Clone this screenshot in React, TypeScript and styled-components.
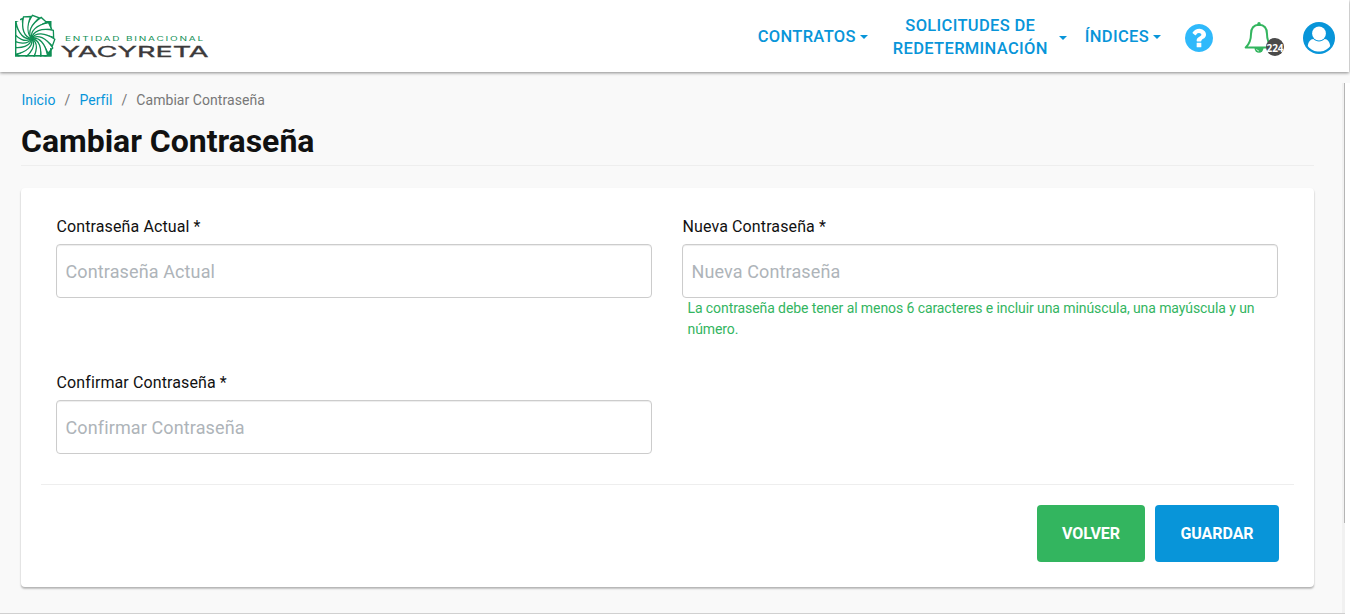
import React from "react";
import styled, { createGlobalStyle } from "styled-components";

const GlobalStyle = createGlobalStyle`
  *, *::before, *::after { box-sizing: border-box; }
  html, body, #root { height: 100%; }
  body {
    margin: 0;
    overflow: hidden;
    background: #f9f9f9;
    color: #111;
    font-family: Roboto, "Liberation Sans", sans-serif;
    font-size: 16px;
    line-height: 1.42857;
  }
`;

const Page = styled.div`
  display: flex;
  flex-direction: column;
  height: 614px;
`;

const Header = styled.header`
  display: flex;
  flex: none;
  align-items: center;
  justify-content: space-between;
  width: 1349px;
  height: 72px;
  padding: 0 14px 0 14px;
  background: #fff;
  box-shadow: 0 1px 3px rgba(0, 0, 0, 0.45);
  z-index: 1;
`;

const Logo = styled.svg`
  display: block;
  width: 200px;
  height: 48px;
`;

const Nav = styled.nav`
  display: flex;
  align-items: center;
`;

const NavItem = styled.a<{ $gap: number; $after: number; $drop?: number }>`
  display: flex;
  align-items: center;
  gap: ${(p) => p.$gap}px;
  margin-top: ${(p) => p.$drop ?? 0}px;
  margin-right: ${(p) => p.$after}px;
  color: #0895d9;
  font-size: 16.5px;
  font-weight: 500;
  line-height: 23px;
  letter-spacing: 0.33px;
  text-align: center;
  white-space: pre-line;
`;

const Caret = styled.span`
  border: 4px solid transparent;
  border-top-color: currentColor;
  border-bottom: 0;
  margin-top: 2px;
`;

const Icon = styled.svg<{ $w: number; $h: number }>`
  display: block;
  flex: none;
  width: ${(p) => p.$w}px;
  height: ${(p) => p.$h}px;
  overflow: visible;
`;

const IconLink = styled.a`
  margin-top: 3px;
`;

const BellBox = styled.div`
  position: relative;
  margin: 3px 19px 0 31px;
  width: 40px;
  height: 34px;
`;

const Badge = styled.span`
  position: absolute;
  left: 22px;
  top: 17px;
  width: 18px;
  height: 18px;
  border-radius: 50%;
  background: #4a4a4a;
  color: #fff;
  font: 700 10px/20px "Open Sans", sans-serif;
  display: flex;
  justify-content: center;
`;

const Body = styled.div`
  display: flex;
  flex: 1;
  min-height: 0;
`;

const Content = styled.main`
  flex: none;
  width: 1342px;
  padding: 18px 28px 0 21px;
  border-bottom: 1px solid #d0d0d0;
`;

const ScrollRail = styled.div`
  width: 3px;
  margin-top: 11px;
  background: #f1f1f1;
  border-bottom: 1px solid #d0d0d0;
`;

const ScrollThumb = styled.div`
  width: 1px;
  height: 440px;
  margin-left: 2px;
  background: #b5b5b5;
`;

const Gutter = styled.div`
  flex: 1;
  margin-top: 11px;
  background: #fff;
`;

const Breadcrumb = styled.div`
  display: flex;
  gap: 9px;
  height: 20px;
  padding-left: 0.5px;
  font-size: 14px;
  line-height: 20px;
  letter-spacing: 0.06px;
  color: #777;
`;

const Crumb = styled.a`
  color: #0895d9;
`;

const Title = styled.h1`
  margin: 0 0 22px;
  height: 56px;
  padding: 9px 0 0;
  border-bottom: 1px solid #eee;
  font-size: 32px;
  font-weight: 700;
  line-height: 44px;
  letter-spacing: -0.03px;
`;

const Card = styled.section`
  height: 399px;
  padding: 27px 20px 0;
  border-radius: 4px;
  background: #fff;
  box-shadow: 0 2px 2px rgba(0, 0, 0, 0.2), 0 1px 2px rgba(0, 0, 0, 0.12);
`;

const Fields = styled.div`
  display: grid;
  grid-template-columns: 596px 596px;
  column-gap: 30px;
  grid-template-rows: 156px 113px;
  padding-left: 15px;
`;

const Label = styled.label`
  display: block;
  height: 29px;
  line-height: 23px;
  padding-left: 0.5px;
  letter-spacing: 0.11px;
`;

const Input = styled.input`
  display: block;
  width: 100%;
  height: 54px;
  padding: 0 8.5px;
  border: 1px solid #ccc;
  border-radius: 4px;
  background: #fff;
  box-shadow: inset 0 1px 1px rgba(0, 0, 0, 0.075);
  font: 18px Roboto, sans-serif;
  letter-spacing: 0.12px;
  &::placeholder { color: #aeb4b9; opacity: 1; }
`;

const Hint = styled.p`
  margin: 0 5px 0 5.5px;
  font-size: 14px;
  line-height: 21px;
  letter-spacing: -0.085px;
  color: #33b55f;
`;

const Actions = styled.div`
  display: flex;
  justify-content: flex-end;
  gap: 10px;
  padding: 20px 15px 0;
  border-top: 1px solid #eee;
`;

const Button = styled.button<{ $color: string; $w: number }>`
  width: ${(p) => p.$w}px;
  height: 57px;
  padding: 0;
  border: 0;
  border-radius: 4px;
  background: ${(p) => p.$color};
  color: #fff;
  font: 700 16px Roboto, sans-serif;
  letter-spacing: -0.05px;
`;

const blades = Array.from({ length: 16 }, (_, i) => i * 22.5 + 8);

const BrandLogo = () => (
  <Logo viewBox="14 12 200 48">
    <defs>
      <clipPath id="emblem">
        <path d="M15 21H20V14H46L56 30V56.500H15Z" />
      </clipPath>
    </defs>
    <path d="M15 21H51.500V56.500H15Z" fill="#0f8f55" />
    <g clipPath="url(#emblem)">
      {blades.map((a) => (
        <path
          key={a}
          transform={`translate(31.7 38.5) rotate(${a})`}
          d="M0 0C-7 -3 -8 -12 -2.500 -23L4.500 -21.500C-2 -13 -3 -5 0 0Z"
          fill="#fff"
          stroke="#0f8f55"
          strokeWidth="1.300"
        />
      ))}
    </g>
    <path d="M15.700 21V55.800H50.800V48" fill="none" stroke="#0f8f55" strokeWidth="1.400" />
    <text x="65" y="41" fill="#0f8f55" fontFamily="Inter" fontSize="5.600" letterSpacing="1" textLength="140" lengthAdjust="spacingAndGlyphs">
      ENTIDAD BINACIONAL
    </text>
    <text x="60.500" y="57" fill="#3c3a3b" stroke="#3c3a3b" strokeWidth=".3" fontFamily="Inter" fontSize="15" textLength="148" lengthAdjust="spacingAndGlyphs">
      YACYRETA
    </text>
  </Logo>
);

const HelpIcon = () => (
  <Icon $w={28} $h={28} viewBox="128 128 1536 1536">
    <path
      fill="#2fb9fb"
      d="M1024 1376v-192q0-14-9-23t-23-9h-192q-14 0-23 9t-9 23v192q0 14 9 23t23 9h192q14 0 23-9t9-23zm256-672q0-88-55.500-163t-138.500-116-170-41q-243 0-371 213-15 24 8 42l132 100q7 6 19 6 16 0 25-12 53-68 86-92 34-24 86-24 48 0 85.500 26t37.500 59q0 38-20 61t-68 45q-63 28-115.500 86.500t-52.500 125.500v36q0 14 9 23t23 9h192q14 0 23-9t9-23q0-19 21.500-49.500t54.500-49.500q32-18 49-28.500t46-35 44.500-48 28-60.500 12.500-81zm384 192q0 209-103 385.500t-279.500 279.500-385.500 103-385.500-103-279.500-279.500-103-385.500 103-385.500 279.500-279.500 385.500-103 385.500 103 279.500 279.500 103 385.500z"
    />
  </Icon>
);

const BellIcon = () => (
  <Icon $w={30} $h={34} viewBox="0 0 30 34">
    <path d="M15 3.800C9.500 4 7 8 7 13C7 19 5.500 23 1.700 26.500H28.300C24.500 23 23 19 23 13C23 8 20.500 4 15 3.800Z" fill="none" stroke="#33b55f" strokeWidth="2" strokeLinejoin="round" />
    <circle cx="15" cy="2.700" r="1.700" fill="#33b55f" />
    <path d="M10.500 27H19.500A4.500 4.800 0 0 1 10.500 27Z" fill="#33b55f" />
    <path d="M12.500 28A2.600 2.600 0 0 0 15 30" fill="none" stroke="#fff" strokeWidth=".7" />
  </Icon>
);

const UserIcon = () => (
  <Icon $w={32} $h={32} viewBox="0 0 32 32">
    <circle cx="16" cy="16" r="16" fill="#0895d9" />
    <path d="M4.800 24C5.300 19.500 7.500 17.300 10.300 17C13.300 20.200 18.700 20.200 21.700 17C24.500 17.300 26.700 19.500 27.200 24C24.200 28 20 29.600 16 29.600S7.800 28 4.800 24Z" fill="#fff" />
    <circle cx="16" cy="11.500" r="6.900" fill="#fff" />
  </Icon>
);

const App = () => (
  <>
    <GlobalStyle />
    <Page>
      <Header>
        <BrandLogo />
        <Nav>
          <NavItem $gap={4} $after={25}>CONTRATOS<Caret /></NavItem>
          <NavItem $gap={11} $after={18} $drop={1}>{"SOLICITUDES DE\nREDETERMINACIÓN"}<Caret /></NavItem>
          <NavItem $gap={4} $after={24}>ÍNDICES<Caret /></NavItem>
          <IconLink><HelpIcon /></IconLink>
          <BellBox>
            <BellIcon />
            <Badge>224</Badge>
          </BellBox>
          <IconLink><UserIcon /></IconLink>
        </Nav>
      </Header>
      <Body>
        <Content>
          <Breadcrumb>
            <Crumb>Inicio</Crumb>
            <span>/</span>
            <Crumb>Perfil</Crumb>
            <span>/</span>
            <span>Cambiar Contraseña</span>
          </Breadcrumb>
          <Title>Cambiar Contraseña</Title>
          <Card>
            <Fields>
              <div>
                <Label>Contraseña Actual *</Label>
                <Input placeholder="Contraseña Actual" />
              </div>
              <div>
                <Label>Nueva Contraseña *</Label>
                <Input placeholder="Nueva Contraseña" />
                <Hint>La contraseña debe tener al menos 6 caracteres e incluir una minúscula, una mayúscula y un número.</Hint>
              </div>
              <div>
                <Label>Confirmar Contraseña *</Label>
                <Input placeholder="Confirmar Contraseña" />
              </div>
            </Fields>
            <Actions>
              <Button $color="#33b55f" $w={108}>VOLVER</Button>
              <Button $color="#0895d9" $w={124}>GUARDAR</Button>
            </Actions>
          </Card>
        </Content>
        <ScrollRail>
          <ScrollThumb />
        </ScrollRail>
        <Gutter />
      </Body>
    </Page>
  </>
);

export default App;
